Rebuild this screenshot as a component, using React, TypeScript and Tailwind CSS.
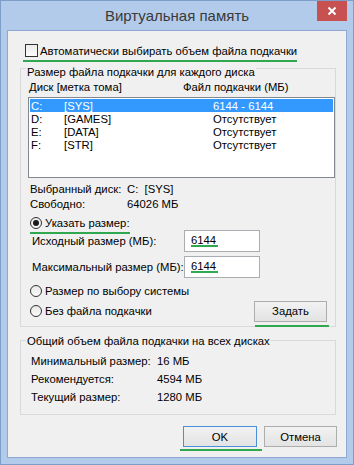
import React from "react";

const drives = [
  { letter: "C:", label: "[SYS]", size: "6144 - 6144", selected: true },
  { letter: "D:", label: "[GAMES]", size: "Отсутствует", selected: false },
  { letter: "E:", label: "[DATA]", size: "Отсутствует", selected: false },
  { letter: "F:", label: "[STR]", size: "Отсутствует", selected: false },
];

const totals = [
  { label: "Минимальный размер:", value: "16 МБ" },
  { label: "Рекомендуется:", value: "4594 МБ" },
  { label: "Текущий размер:", value: "1280 МБ" },
];

function Mark({ className }: { className: string }) {
  return <span className={`absolute h-[2px] bg-[#2fa84f] ${className}`} />;
}

function Radio({ checked = false }: { checked?: boolean }) {
  return (
    <span className="flex h-[12px] w-[12px] shrink-0 items-center justify-center rounded-full border border-[#333] bg-gradient-to-b from-[#e8e8e8] to-[#fafafa]">
      {checked && <span className="h-[6px] w-[6px] rounded-full bg-[#1a1a1a]" />}
    </span>
  );
}

function Button({ label, primary = false }: { label: string; primary?: boolean }) {
  return (
    <button
      className={`flex h-[21px] w-full items-center justify-center border bg-gradient-to-b from-[#f2f2f2] to-[#e3e3e3] text-black ${
        primary ? "border-[#4a90d9]" : "border-[#adadad]"
      }`}
    >
      {label}
    </button>
  );
}

export default function App() {
  return (
    <div
      className="flex h-[465px] w-[354px] flex-col whitespace-nowrap border border-[#7f9dc9] bg-[#b2cbea] text-[11.3px] leading-[14px] text-black"
      style={{ fontFamily: '"Liberation Sans", Arial, sans-serif' }}
    >
      {/* title bar */}
      <div className="flex h-[29px] shrink-0">
        <div className="w-[36px]" />
        <div className="flex flex-1 items-center justify-center text-[15px] text-[#3a3a3a]">
          Виртуальная память
        </div>
        <div className="mr-[6px] flex h-[20px] w-[30px] items-center justify-center bg-[#c75050]">
          <svg width="10" height="10" viewBox="0 0 10 10">
            <path d="M1.5 1.5 L8.5 8.5 M8.5 1.5 L1.5 8.5" stroke="#fff" strokeWidth="2" />
          </svg>
        </div>
      </div>

      {/* client area */}
      <div className="mx-[6px] mb-[6px] flex flex-1 flex-col border border-[#8ea9cf] bg-[#f0f0f0]">
        <div className="relative mt-[13px] flex h-[13px] items-center gap-[2px] pl-[17px]">
          <span className="h-[13px] w-[13px] border border-[#333] bg-gradient-to-b from-[#ececec] to-[#fbfbfb]" />
          <span>Автоматически выбирать объем файла подкачки</span>
          <Mark className="left-[15px] top-[16px] w-[274px]" />
        </div>

        <fieldset className="ml-[12px] w-[316px] border border-[#d9d9d9] pb-[4px]">
          <legend className="ml-[5px] px-[1px] pt-[8px] leading-[14px]">
            Размер файла подкачки для каждого диска
          </legend>
          <div className="flex h-[16px] items-center pl-[8px]">
            <span className="w-[154px] shrink-0">Диск [метка тома]</span>
            <span>Файл подкачки (МБ)</span>
          </div>
          <div className="ml-[7px] mt-[2px] h-[81px] w-[307px] border border-[#828790] bg-white pt-[1px]">
            {drives.map((d) => (
              <div
                key={d.letter}
                className={`mx-[1px] flex h-[13px] items-center pl-[1px] ${
                  d.selected ? "bg-[#3399ff] text-white" : ""
                }`}
              >
                <span className="w-[33px] shrink-0">{d.letter}</span>
                <span className="w-[149px] shrink-0">{d.label}</span>
                <span>{d.size}</span>
              </div>
            ))}
          </div>

          <div className="mt-[3px] flex h-[15px] items-center pl-[9px]">
            <span className="w-[97px] shrink-0">Выбранный диск:</span>
            <span>C:&nbsp;&nbsp;[SYS]</span>
          </div>
          <div className="flex h-[15px] items-center pl-[9px]">
            <span className="w-[97px] shrink-0">Свободно:</span>
            <span>64026 МБ</span>
          </div>

          <div className="mt-[4px] flex h-[15px] items-center pl-[9px]">
            <div className="relative flex items-center gap-[3px]">
              <Radio checked />
              <span>Указать размер:</span>
              <Mark className="left-0 top-[16px] w-[100px]" />
            </div>
          </div>

          <div className="flex h-[22px] items-center pl-[11px]">
            <span className="w-[152px] shrink-0">Исходный размер (МБ):</span>
            <div className="relative flex h-[22px] w-[76px] items-start border border-[#abadb3] bg-white pl-[6px] pt-[2px]">
              6144
              <Mark className="left-[6px] top-[14px] w-[27px]" />
            </div>
          </div>
          <div className="mt-[4px] flex h-[22px] items-center pl-[11px]">
            <span className="w-[152px] shrink-0">Максимальный размер (МБ):</span>
            <div className="relative flex h-[22px] w-[76px] items-start border border-[#abadb3] bg-white pl-[6px] pt-[2px]">
              6144
              <Mark className="left-[6px] top-[14px] w-[27px]" />
            </div>
          </div>

          <div className="mt-[5px] flex h-[15px] items-center gap-[3px] pl-[9px]">
            <Radio />
            <span>Размер по выбору системы</span>
          </div>
          <div className="mt-[2px] flex h-[22px] items-center pl-[9px] pr-[8px]">
            <Radio />
            <span className="ml-[3px]">Без файла подкачки</span>
            <div className="relative ml-auto w-[73px]">
              <Button label="Задать" />
              <Mark className="left-[1px] top-[24px] w-[74px]" />
            </div>
          </div>
        </fieldset>

        <fieldset className="ml-[12px] mt-[5px] w-[316px] border border-[#d9d9d9] pb-[8px]">
          <legend className="ml-[5px] px-[1px] pt-[2px] leading-[14px]">
            Общий объем файла подкачки на всех дисках
          </legend>
          <div className="mt-[4px]">
            {totals.map((t) => (
              <div key={t.label} className="flex h-[18px] items-center pl-[10px]">
                <span className="w-[126px] shrink-0">{t.label}</span>
                <span>{t.value}</span>
              </div>
            ))}
          </div>
        </fieldset>

        <div className="mt-[11px] flex justify-end gap-[7px] pr-[9px]">
          <div className="relative w-[74px]">
            <Button label="OK" primary />
            <Mark className="-left-[3px] top-[23px] w-[82px]" />
          </div>
          <div className="w-[73px]">
            <Button label="Отмена" />
          </div>
        </div>
      </div>
    </div>
  );
}
